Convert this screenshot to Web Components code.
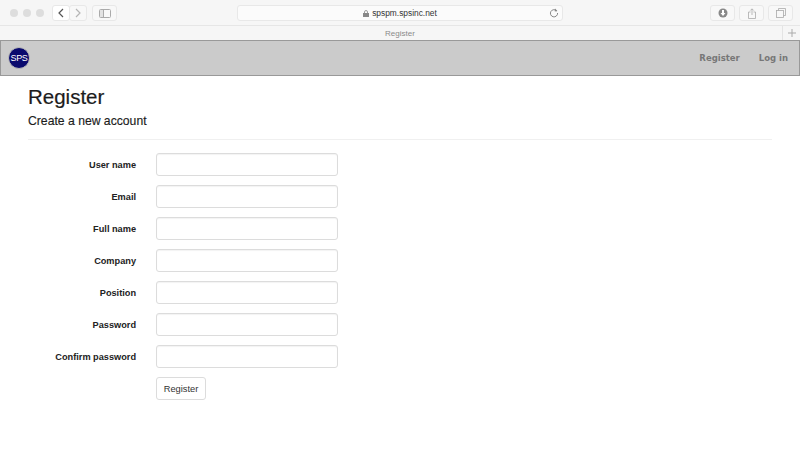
<!DOCTYPE html>
<html><head><meta charset="utf-8"><style>
html,body{margin:0;padding:0;background:#fff;width:800px;height:466px;overflow:hidden;font-family:"Liberation Sans",Arial,sans-serif}
</style></head><body>
<safari-chrome url="spspm.spsinc.net" tab="Register"></safari-chrome>
<site-nav></site-nav>
<register-page></register-page>
<script>
function def(name,html){customElements.define(name,class extends HTMLElement{constructor(){super();this.attachShadow({mode:'open'}).innerHTML=typeof html==='function'?html(this):html;}});}
const btn=`display:flex;align-items:center;justify-content:center;box-sizing:border-box;height:16px;border:1px solid #e8e8e8;border-radius:3px;background:#f8f8f8;`;
def('safari-chrome',el=>`<style>
:host{display:block;height:40px;background:#f6f6f6;color:#333}
.bar{height:26px;box-sizing:border-box;border-bottom:1px solid #e6e6e6;display:flex;align-items:center;padding:2px 0 1px 10px}
.dots{display:flex;gap:5px;margin-right:8px}.dots i{width:8px;height:8px;border-radius:50%;background:#dddddd}
.b{${btn}}
.nav{display:flex;margin-right:5px}.nav .b{width:18px}
.nav .b+.b{margin-left:-1px}
.url{${btn}width:326px;margin-left:120px;position:relative;font-size:8.4px;color:#333;gap:3px;background:#fbfbfb}
.reload{position:absolute;right:3px;top:2px}
.right{display:flex;gap:4px;margin-left:auto;padding-right:7px}.right .b{width:25px}
.tab{height:14px;display:flex;align-items:center;position:relative;justify-content:center;font-size:8px;color:#8a8a8a}
.plus{position:absolute;right:0;top:0;width:17px;height:14px;border-left:1px solid #e4e4e4;display:flex;align-items:center;justify-content:center}
svg{display:block}
</style>
<div class="bar">
<div class="dots"><i></i><i></i><i></i></div>
<div class="nav"><div class="b" style="background:#fff"><svg width="8" height="10" viewBox="0 0 8 10"><path d="M6 1 2 5l4 4" fill="none" stroke="#555" stroke-width="1.2"/></svg></div><div class="b"><svg width="8" height="10" viewBox="0 0 8 10"><path d="M2 1l4 4-4 4" fill="none" stroke="#b5b5b5" stroke-width="1.2"/></svg></div></div>
<div class="b" style="width:25px"><svg width="12" height="9" viewBox="0 0 12 9"><rect x=".5" y=".5" width="11" height="8" rx="1" fill="none" stroke="#aaa"/><path d="M4.500 1v7" stroke="#aaa"/><rect x="1" y="1" width="3" height="7" fill="#e2e2e2"/></svg></div>
<div class="url"><svg width="6" height="7" viewBox="0 0 6 7"><path d="M1.500 3V2a1.500 1.500 0 0 1 3 0v1" fill="none" stroke="#888" stroke-width=".8"/><rect y="3" width="6" height="4" fill="#888"/></svg><span>${el.getAttribute('url')}</span>
<svg class="reload" width="10" height="10" viewBox="0 0 10 10"><path d="M7.800 3A3.600 3.600 0 1 0 8.600 5" fill="none" stroke="#888"/><path d="M6 .6 8.400 3 5.800 3.600z" fill="#888"/></svg></div>
<div class="right">
<div class="b"><svg width="10" height="10" viewBox="0 0 10 10"><circle cx="5" cy="5" r="4.500" fill="#888"/><path d="M4 2h2v3h1.500L5 8 2.500 5H4z" fill="#fff"/></svg></div>
<div class="b"><svg width="8" height="11" viewBox="0 0 8 11"><path d="M2.500 4H.5v6.500h7V4H5.500M4 7V1M2.300 2.500 4 .8l1.700 1.700" fill="none" stroke="#aaa" stroke-width=".8"/></svg></div>
<div class="b"><svg width="10" height="10" viewBox="0 0 10 10"><rect x=".5" y="2.500" width="7" height="7" fill="none" stroke="#aaa" stroke-width=".8"/><path d="M2.500 2.500v-2h7v7h-2" fill="none" stroke="#aaa" stroke-width=".8"/></svg></div>
</div></div>
<div class="tab"><span>${el.getAttribute('tab')}</span><div class="plus"><svg width="8" height="8" viewBox="0 0 8 8"><path d="M4 0v8M0 4h8" stroke="#aaa"/></svg></div></div>`);
def('site-nav',`<style>
:host{display:block;height:36px;box-sizing:border-box;background:#cbcbcb;border:1px solid #999;font-family:"DejaVu Sans",Verdana,sans-serif}
.in{height:100%;display:flex;align-items:center;padding:0 11px 0 7px}
.logo{width:22px;height:22px;box-sizing:border-box;border-radius:50%;background:#0a0a6e;border:1px solid #bbb;color:#fff;font:9px/21px "Liberation Sans",sans-serif;text-align:center;letter-spacing:-.3px}
a{font-size:8.500px;font-weight:700;color:#777;text-decoration:none}
.sp{flex:1}a+a{margin-left:19px}
</style><div class="in"><div class="logo">SPS</div><div class="sp"></div><a>Register</a><a>Log in</a></div>`);
def('form-row',el=>`<style>
:host{display:flex;align-items:center;height:23px;margin-bottom:9px}
label{width:108px;text-align:right;font-size:9.200px;font-weight:700;color:#222;margin-right:20px;white-space:nowrap}
input{width:182px;height:23px;box-sizing:border-box;border:1px solid #dcdcdc;border-radius:3px;background:#fff;padding:0;margin:0;box-shadow:inset 0 1px 1px rgba(0,0,0,.05)}
</style><label>${el.getAttribute('label')}</label><input type="text">`);
def('register-page',`<style>
:host{display:block;padding:0 28px;color:#222}
h1{font-size:20.500px;font-weight:400;margin:0;line-height:24px;padding-top:9px;color:#1c1c1c;-webkit-text-stroke:.2px #1c1c1c}
h2{font-size:12.200px;font-weight:400;margin:0;line-height:16px;padding-top:4px;color:#1c1c1c;-webkit-text-stroke:.15px #1c1c1c}
hr{border:0;border-top:1px solid #f0f0f0;margin:10px 0 13px}
.act{padding-left:128px}
button{width:50px;height:23px;box-sizing:border-box;background:#fff;border:1px solid #dcdcdc;border-radius:3px;font:9.300px "Liberation Sans",sans-serif;color:#333;padding:0;display:block}
</style><h1>Register</h1><h2>Create a new account</h2><hr>
<form-row label="User name"></form-row><form-row label="Email"></form-row><form-row label="Full name"></form-row><form-row label="Company"></form-row><form-row label="Position"></form-row><form-row label="Password"></form-row><form-row label="Confirm password"></form-row>
<div class="act"><button>Register</button></div>`);
</script>
</body></html>
